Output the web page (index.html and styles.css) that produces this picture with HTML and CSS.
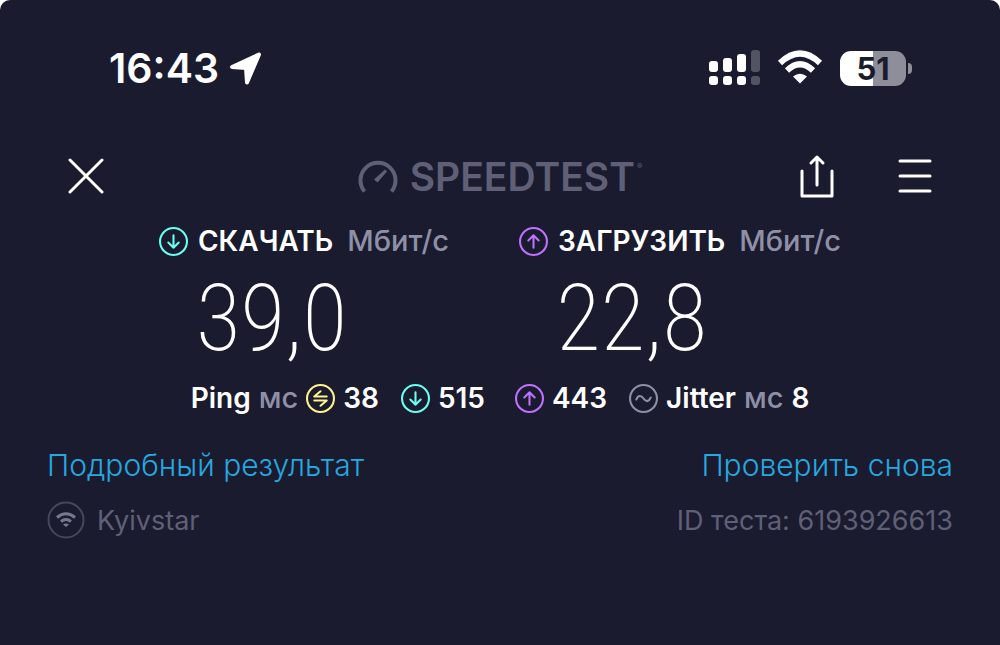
FILE: index.html
```html
<!DOCTYPE html>
<html lang="ru">
<head>
	<meta charset="utf-8">
	<meta name="viewport" content="width=device-width, initial-scale=1">
	<title>Speedtest</title>
	<link rel="stylesheet" href="styles.css">
</head>
<body>
	<!-- shared icons -->
	<svg class="defs" aria-hidden="true">
		<symbol id="down" viewBox="0 0 28 28">
			<circle cx="14" cy="14" r="13"/>
			<path d="M14 8v12M9 15l5 5 5-5"/>
		</symbol>
		<symbol id="up" viewBox="0 0 28 28">
			<circle cx="14" cy="14" r="13"/>
			<path d="M14 20V8M9 13l5-5 5 5"/>
		</symbol>
	</svg>
	<div class="screen">
		<div class="status">
			<div class="clock">
				<span>16:43</span>
				<svg width="34" height="34" viewBox="0 0 34 34"><path d="M3 16L30 3.500L18 31.500L17 17Z" fill="#fff" stroke="#fff" stroke-width="4" stroke-linejoin="round"/></svg>
			</div>
			<div class="indicators">
				<svg width="52" height="36" viewBox="0 0 52 36" fill="#fff">
					<rect x="1" y="11" width="9" height="11" rx="3"/>
					<rect x="15" y="8" width="9" height="14" rx="3"/>
					<rect x="29" y="4" width="9" height="18" rx="3"/>
					<rect x="43" y="0" width="9" height="22" rx="3" opacity=".25"/>
					<rect x="1" y="26" width="9" height="9" rx="3"/>
					<rect x="15" y="26" width="9" height="9" rx="3"/>
					<rect x="29" y="26" width="9" height="9" rx="3"/>
					<rect x="43" y="26" width="9" height="9" rx="3" opacity=".25"/>
				</svg>
				<svg width="46" height="36" viewBox="0 0 46 36" fill="none" stroke="#fff" stroke-width="6">
					<path d="M3 13Q23 -6 43 13"/>
					<path d="M10 20.500Q23 8 36 20.500"/>
					<path d="M16 26.500Q23 21 30 26.500L23 33.500Z" fill="#fff" stroke="none"/>
				</svg>
				<div class="battery"><span>51</span></div>
			</div>
		</div>

		<header class="bar">
			<button type="button" aria-label="Закрыть">
				<svg width="36" height="36" viewBox="0 0 36 36"><path d="M2 2l32 32M34 2L2 34"/></svg>
			</button>
			<div class="logo">
				<svg width="40" height="36" viewBox="0 0 40 36" fill="none" stroke="#5f6078" stroke-width="4">
					<path d="M6.500 33.500A17.500 17.500 0 1 1 33.500 33.500"/>
					<path d="M16 21.500L27 11.500L29 13.500L19.500 24.500Z" fill="#5f6078" stroke="none"/>
				</svg>
				<span>SPEEDTEST</span><sup>®</sup>
			</div>
			<div class="actions">
				<button type="button" aria-label="Поделиться">
					<svg width="34" height="44" viewBox="0 0 34 44"><path d="M2 17v25h30V17M17 31V3M11 9l6-6 6 6"/></svg>
				</button>
				<button type="button" aria-label="Меню">
					<svg width="34" height="36" viewBox="0 0 34 36"><path d="M2 3h30M2 18h30M2 33h30"/></svg>
				</button>
			</div>
		</header>

		<main>
			<div class="speeds">
				<section>
					<h2><svg class="icon teal"><use href="#down"/></svg>СКАЧАТЬ <small>Мбит/с</small></h2>
					<p class="value">39,0</p>
				</section>
				<section>
					<h2><svg class="icon purple"><use href="#up"/></svg>ЗАГРУЗИТЬ <small>Мбит/с</small></h2>
					<p class="value">22,8</p>
				</section>
			</div>

			<div class="latency">
				<div class="item">
					<span>Ping</span>
					<small>мс</small>
					<svg class="icon yellow" viewBox="0 0 28 28"><circle cx="14" cy="14" r="13"/><path d="M20 12H8l6-5M8 16h12l-6 5"/></svg>
					<span>38</span>
				</div>
				<div class="item"><svg class="icon teal"><use href="#down"/></svg><span>515</span></div>
				<div class="item upload"><svg class="icon purple"><use href="#up"/></svg><span>443</span></div>
				<div class="item">
					<svg class="icon grey" viewBox="0 0 28 28"><circle cx="14" cy="14" r="13"/><path d="M7 15c2-5 5-4 7-1s5 4 7-1"/></svg>
					<span>Jitter</span>
					<small>мс</small>
					<span>8</span>
				</div>
			</div>

			<div class="row links">
				<a href="#">Подробный результат</a>
				<a href="#">Проверить снова</a>
			</div>
			<div class="row info">
				<div class="provider">
					<svg width="38" height="38" viewBox="0 0 38 38" fill="none" stroke="#77788e">
						<circle cx="19" cy="19" r="17.500" stroke="#46475b" stroke-width="2"/>
						<path d="M10 16.500Q19 9 28 16.500M14 20.500Q19 16.500 24 20.500" stroke-width="3"/>
						<path d="M16 23.500Q19 21.500 22 23.500L19 26Z" fill="#77788e" stroke="none"/>
					</svg>
					<span>Kyivstar</span>
				</div>
				<span>ID теста: 6193926613</span>
			</div>
		</main>
	</div>
</body>
</html>
```
FILE: styles.css
```css
* {
	box-sizing: border-box;
}
body {
	margin: 0;
	background: #fff;
	color: #fff;
	font-family: Inter, "Open Sans", sans-serif;
}
svg {
	display: block;
	flex: none;
}
.defs {
	display: none;
}
.screen {
	min-height: 100vh;
	padding: 48px 47px 0;
	background: #1a1b2e;
	border-radius: 10px 10px 0 0;
}
.status {
	display: flex;
	justify-content: space-between;
	align-items: center;
	height: 40px;
	padding: 0 41px 0 62px;
}
.clock {
	display: flex;
	align-items: center;
	gap: 10px;
	font-size: 41px;
	font-weight: 600;
}
.indicators {
	display: flex;
	align-items: center;
	gap: 17px;
}
.battery {
	position: relative;
	width: 66px;
	height: 35px;
	margin-right: 6px;
	border-radius: 11px;
	background: linear-gradient(90deg, #fff 50%, #8e8e9a 50%);
	color: #1a1b2e;
	font-size: 31px;
	font-weight: 700;
	line-height: 35px;
	text-align: center;
}
.battery::after {
	content: "";
	position: absolute;
	top: 12px;
	right: -6px;
	width: 4px;
	height: 11px;
	border-radius: 0 4px 4px 0;
	background: #8e8e9a;
}
.bar {
	display: grid;
	grid-template-columns: 1fr auto 1fr;
	align-items: center;
	height: 48px;
	margin-top: 64px;
	padding: 0 21px;
}
.bar button {
	padding: 0;
	border: 0;
	background: none;
	justify-self: start;
}
.bar button svg {
	fill: none;
	stroke: #fff;
	stroke-width: 3;
	stroke-linecap: round;
	stroke-linejoin: round;
}
.logo {
	display: flex;
	align-items: center;
	gap: 12px;
	color: #5f6078;
	font-size: 39px;
	font-weight: 600;
}
.logo sup {
	align-self: flex-start;
	margin: 8px 0 0 -10px;
	font-size: 8px;
}
.actions {
	display: flex;
	align-items: center;
	justify-content: flex-end;
	gap: 64px;
}
.speeds {
	display: grid;
	grid-template-columns: 360px auto;
	justify-content: center;
	padding-top: 24px;
}
h2 {
	display: flex;
	align-items: center;
	margin: 0;
	font-size: 28px;
	font-weight: 600;
	line-height: 34px;
}
small {
	color: #8f90a8;
	font-size: 29px;
	font-weight: 500;
}
h2 small {
	margin-left: 14px;
}
.icon {
	width: 29px;
	height: 29px;
	fill: none;
	stroke-width: 2;
	stroke-linecap: round;
	stroke-linejoin: round;
}
h2 .icon {
	margin-right: 10px;
}
.teal {
	stroke: #6afff3;
}
.purple {
	stroke: #bf71ff;
}
.yellow {
	stroke: #fff38e;
}
.grey {
	stroke: #8f90a8;
}
.value {
	margin: 0 0 0 37px;
	font-family: "Roboto Condensed", Roboto, sans-serif;
	font-size: 92px;
	font-weight: 200;
	line-height: 122px;
}
.latency {
	display: flex;
	justify-content: center;
	gap: 22px;
	font-size: 28px;
	font-weight: 600;
	line-height: 36px;
}
.item {
	display: flex;
	align-items: center;
	gap: 8px;
}
.upload {
	margin-left: 8px;
}
.row {
	display: flex;
	justify-content: space-between;
	align-items: center;
	height: 38px;
}
.links {
	margin-top: 30px;
	font-size: 30px;
	font-weight: 300;
}
.links a {
	color: #26a8e0;
	text-decoration: none;
}
.info {
	margin-top: 17px;
	color: #5f6078;
	font-size: 27px;
}
.provider {
	display: flex;
	align-items: center;
	gap: 12px;
}
```
